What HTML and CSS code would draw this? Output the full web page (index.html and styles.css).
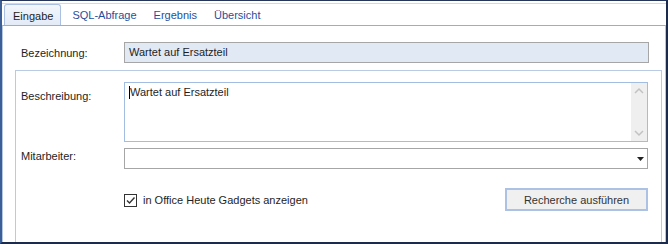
FILE: index.html
```html
<!DOCTYPE html>
<html lang="de">
	<head>
		<meta charset="UTF-8" />
		<title>Eingabe</title>
		<link rel="stylesheet" href="styles.css">
	</head>
	<body>
		<div class="window">
			<div class="tabs">
				<div class="tab active">Eingabe</div>
				<div class="tab">SQL-Abfrage</div>
				<div class="tab">Ergebnis</div>
				<div class="tab">Übersicht</div>
			</div>
			<div class="panel">
				<div class="row top-row">
					<span class="label">Bezeichnung:</span>
					<div class="field readonly">Wartet auf Ersatzteil</div>
				</div>
				<div class="group">
					<div class="row memo-row">
						<span class="label">Beschreibung:</span>
						<div class="memo">
							<div class="memo-text"><span class="caret"></span>Wartet auf Ersatzteil</div>
							<div class="scrollbar">
								<svg width="16" height="12" viewBox="0 0 16 12"><path d="M4 8 L8 4 L12 8" fill="none" stroke="#c2c2c2" stroke-width="1.5" /></svg>
								<svg width="16" height="12" viewBox="0 0 16 12"><path d="M4 4 L8 8 L12 4" fill="none" stroke="#c2c2c2" stroke-width="1.5" /></svg>
							</div>
						</div>
					</div>
					<div class="row combo-row">
						<span class="label">Mitarbeiter:</span>
						<div class="field combo">
							<svg width="7" height="4" viewBox="0 0 7 4"><path d="M0 0 H7 L3.5 4 Z" fill="#222" /></svg>
						</div>
					</div>
					<div class="row action-row">
						<label class="check">
							<span class="box">
								<svg width="11" height="11" viewBox="0 0 11 11"><path d="M2 5.5 L4.5 8 L9.5 2.5" fill="none" stroke="#333" stroke-width="1.4" /></svg>
							</span>
							in Office Heute Gadgets anzeigen
						</label>
						<button>Recherche ausführen</button>
					</div>
				</div>
			</div>
		</div>
	</body>
</html>
```

FILE: styles.css
```css
* {
	box-sizing: border-box;
}
body {
	margin: 0;
	font-family: "Liberation Sans", Arial, sans-serif;
	font-size: 11px;
	color: #1e1e1e;
	background: #fff;
}
.window {
	width: 668px;
	height: 244px;
	border-top: 1px solid #25365a;
	border-right: 2px solid #1d2b4b;
	border-bottom: 2px solid #1d2b4b;
	border-left: 2px solid #3b5f96;
	display: flex;
	flex-direction: column;
	overflow: hidden;
}
.tabs {
	display: flex;
	align-items: flex-end;
	height: 24px;
	padding-left: 2px;
	border-top: 1px solid #fff;
	box-shadow: inset 0 1px 0 #fff, inset 0 2px 0 #d8d8d8;
}
.tab {
	height: 21px;
	padding: 0 8px 0 9px;
	line-height: 23px;
	color: #1f4f9f;
	white-space: nowrap;
}
.tab.active {
	color: #1e1e1e;
	padding: 0 7px 0 8px;
	margin-right: 2px;
	line-height: 22px;
	background: linear-gradient(#f2f6fc, #e3ebf7);
	border: 1px solid #a9c0e2;
	border-bottom: none;
	border-radius: 3px 3px 0 0;
}
.panel {
	flex: 1;
	border-top: 1px solid #8fb0dc;
	border-left: 1px solid #b4c6e2;
	border-right: 1px solid #b4c6e2;
	padding: 16px 3px 0 12px;
	overflow: hidden;
}
.row {
	display: flex;
	align-items: center;
}
.label {
	width: 103px;
	flex: none;
}
.top-row {
	padding-left: 6px;
	padding-right: 13px;
}
.field {
	flex: 1;
	height: 21px;
	border: 1px solid #a6a6a6;
	padding: 0 4px;
	line-height: 19px;
}
.readonly {
	background: #e1e9f5;
}
.group {
	margin-top: 7px;
	height: 200px;
	border: 1px solid #b9cbe4;
	padding: 11px 13px 0 5px;
}
.memo-row {
	align-items: flex-start;
}
.memo-row .label {
	padding-top: 8px;
}
.memo {
	flex: 1;
	height: 60px;
	border: 1px solid #a2bce2;
	display: flex;
}
.memo-text {
	flex: 1;
	padding: 3px 5px;
	position: relative;
}
.caret {
	position: absolute;
	left: 4px;
	top: 3px;
	width: 1px;
	height: 13px;
	background: #000;
}
.scrollbar {
	width: 16px;
	background: #efefef;
	display: flex;
	flex-direction: column;
	justify-content: space-between;
	padding: 2px 0;
}
.combo-row {
	margin-top: 6px;
}
.combo-row .label {
	padding-bottom: 6px;
}
.combo {
	display: flex;
	align-items: center;
	justify-content: flex-end;
	padding-right: 3px;
}
.action-row {
	margin-top: 19px;
	padding-left: 103px;
	justify-content: space-between;
}
.check {
	display: flex;
	align-items: center;
	gap: 6px;
	margin-top: 1px;
}
.box {
	width: 13px;
	height: 13px;
	border: 1px solid #333;
	display: flex;
	align-items: center;
	justify-content: center;
	background: #fff;
}
button {
	width: 143px;
	height: 23px;
	font-family: inherit;
	font-size: 11px;
	color: #333;
	background: #f0f0f0;
	border: 2px solid #abc2e4;
	padding: 0;
}
```
